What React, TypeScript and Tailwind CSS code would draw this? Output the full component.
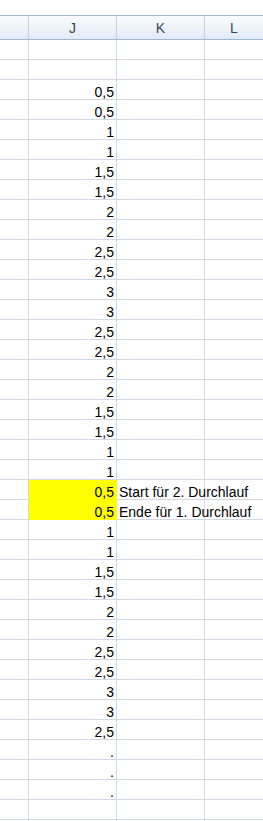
const VALUES: string[] = [
  '', '',
  '0,5', '0,5', '1', '1', '1,5', '1,5', '2', '2', '2,5', '2,5', '3', '3',
  '2,5', '2,5', '2', '2', '1,5', '1,5', '1', '1',
  '0,5', '0,5', '1', '1', '1,5', '1,5', '2', '2', '2,5', '2,5', '3', '3', '2,5',
  '.', '.', '.', '', '',
]

const NOTES: Record<number, string> = {
  22: 'Start für 2. Durchlauf',
  23: 'Ende für 1. Durchlauf',
}

const COLS = 'grid grid-cols-[29px_88px_88px_1fr]'

export default function App() {
  return (
    <div className="h-[821px] w-[263px] overflow-hidden bg-white font-['Liberation_Sans',Arial,sans-serif] text-[14px] text-black">
      <div className="h-[15px] bg-white" />
      <div className={`${COLS} h-[25px] border-y border-[#9eb6ce] bg-gradient-to-b from-[#f9fbfd] to-[#e3eaf4] text-[#3b4654]`}>
        <div className="border-r border-[#c5d2e0]" />
        <div className="flex items-center justify-center border-r border-[#c5d2e0] pt-[2px]">J</div>
        <div className="flex items-center justify-center border-r border-[#c5d2e0] pt-[2px]">K</div>
        <div className="flex items-center justify-center pt-[2px]">L</div>
      </div>
      {VALUES.map((v, i) => {
        const yellow = i === 22 || i === 23
        return (
          <div key={i} className={`${COLS} h-[20px]`}>
            <div className="border-r border-b border-[#d0d7e5]" />
            <div
              className={`flex items-end justify-end pr-[2px] leading-none ${
                yellow ? 'border-r border-b border-[#ffff00] bg-[#ffff00]' : 'border-r border-b border-[#d0d7e5]'
              }`}
            >
              {v}
            </div>
            <div className="relative border-r border-b border-[#d0d7e5]">
              {NOTES[i] && (
                <span className="absolute left-[2px] top-0 flex h-[19px] items-end whitespace-nowrap leading-none">
                  {NOTES[i]}
                </span>
              )}
            </div>
            <div className="border-b border-[#d0d7e5]" />
          </div>
        )
      })}
    </div>
  )
}
